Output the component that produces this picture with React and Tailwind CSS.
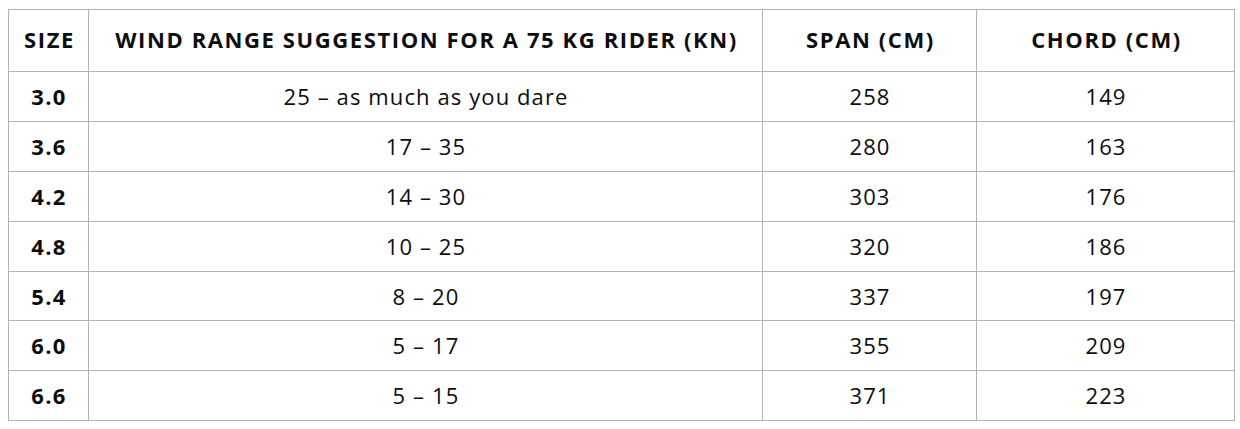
import React from "react";

const rows = [
  ["3.0", "25 – as much as you dare", "258", "149"],
  ["3.6", "17 – 35", "280", "163"],
  ["4.2", "14 – 30", "303", "176"],
  ["4.8", "10 – 25", "320", "186"],
  ["5.4", "8 – 20", "337", "197"],
  ["6.0", "5 – 17", "355", "209"],
  ["6.6", "5 – 15", "371", "223"],
];

const heights = ["h-[50px]", "h-[50px]", "h-[50px]", "h-[50px]", "h-[49px]", "h-[50px]", "h-[50px]"];

export default function App() {
  return (
    <div className="w-[1240px] h-[429px] bg-white pl-2 pt-[9px]" style={{ fontFamily: '"Open Sans", "Noto Sans", sans-serif' }}>
      <div className="grid grid-cols-[80px_674px_214px_258px] w-[1227px] border-l border-t border-[#b3b3b3] text-[#0d0d0d]">
        {["SIZE", "WIND RANGE SUGGESTION FOR A 75 KG RIDER (KN)", "SPAN (CM)", "CHORD (CM)"].map((h, i) => (
          <div key={i} className="h-[62px] flex items-center justify-center border-r border-b border-[#b3b3b3] font-bold text-[22px] tracking-[1.6px] pl-[2px] pb-[2px]">
            {h}
          </div>
        ))}
        {rows.map((r, ri) =>
          r.map((c, ci) => (
            <div
              key={ri + "-" + ci}
              className={`${heights[ri]} flex items-center justify-center border-r border-b border-[#b3b3b3] text-[22px] pl-[1px] ${ci === 0 ? "font-bold tracking-[1.4px]" : "font-normal tracking-[1.1px]"}`}
            >
              {c}
            </div>
          ))
        )}
      </div>
    </div>
  );
}
